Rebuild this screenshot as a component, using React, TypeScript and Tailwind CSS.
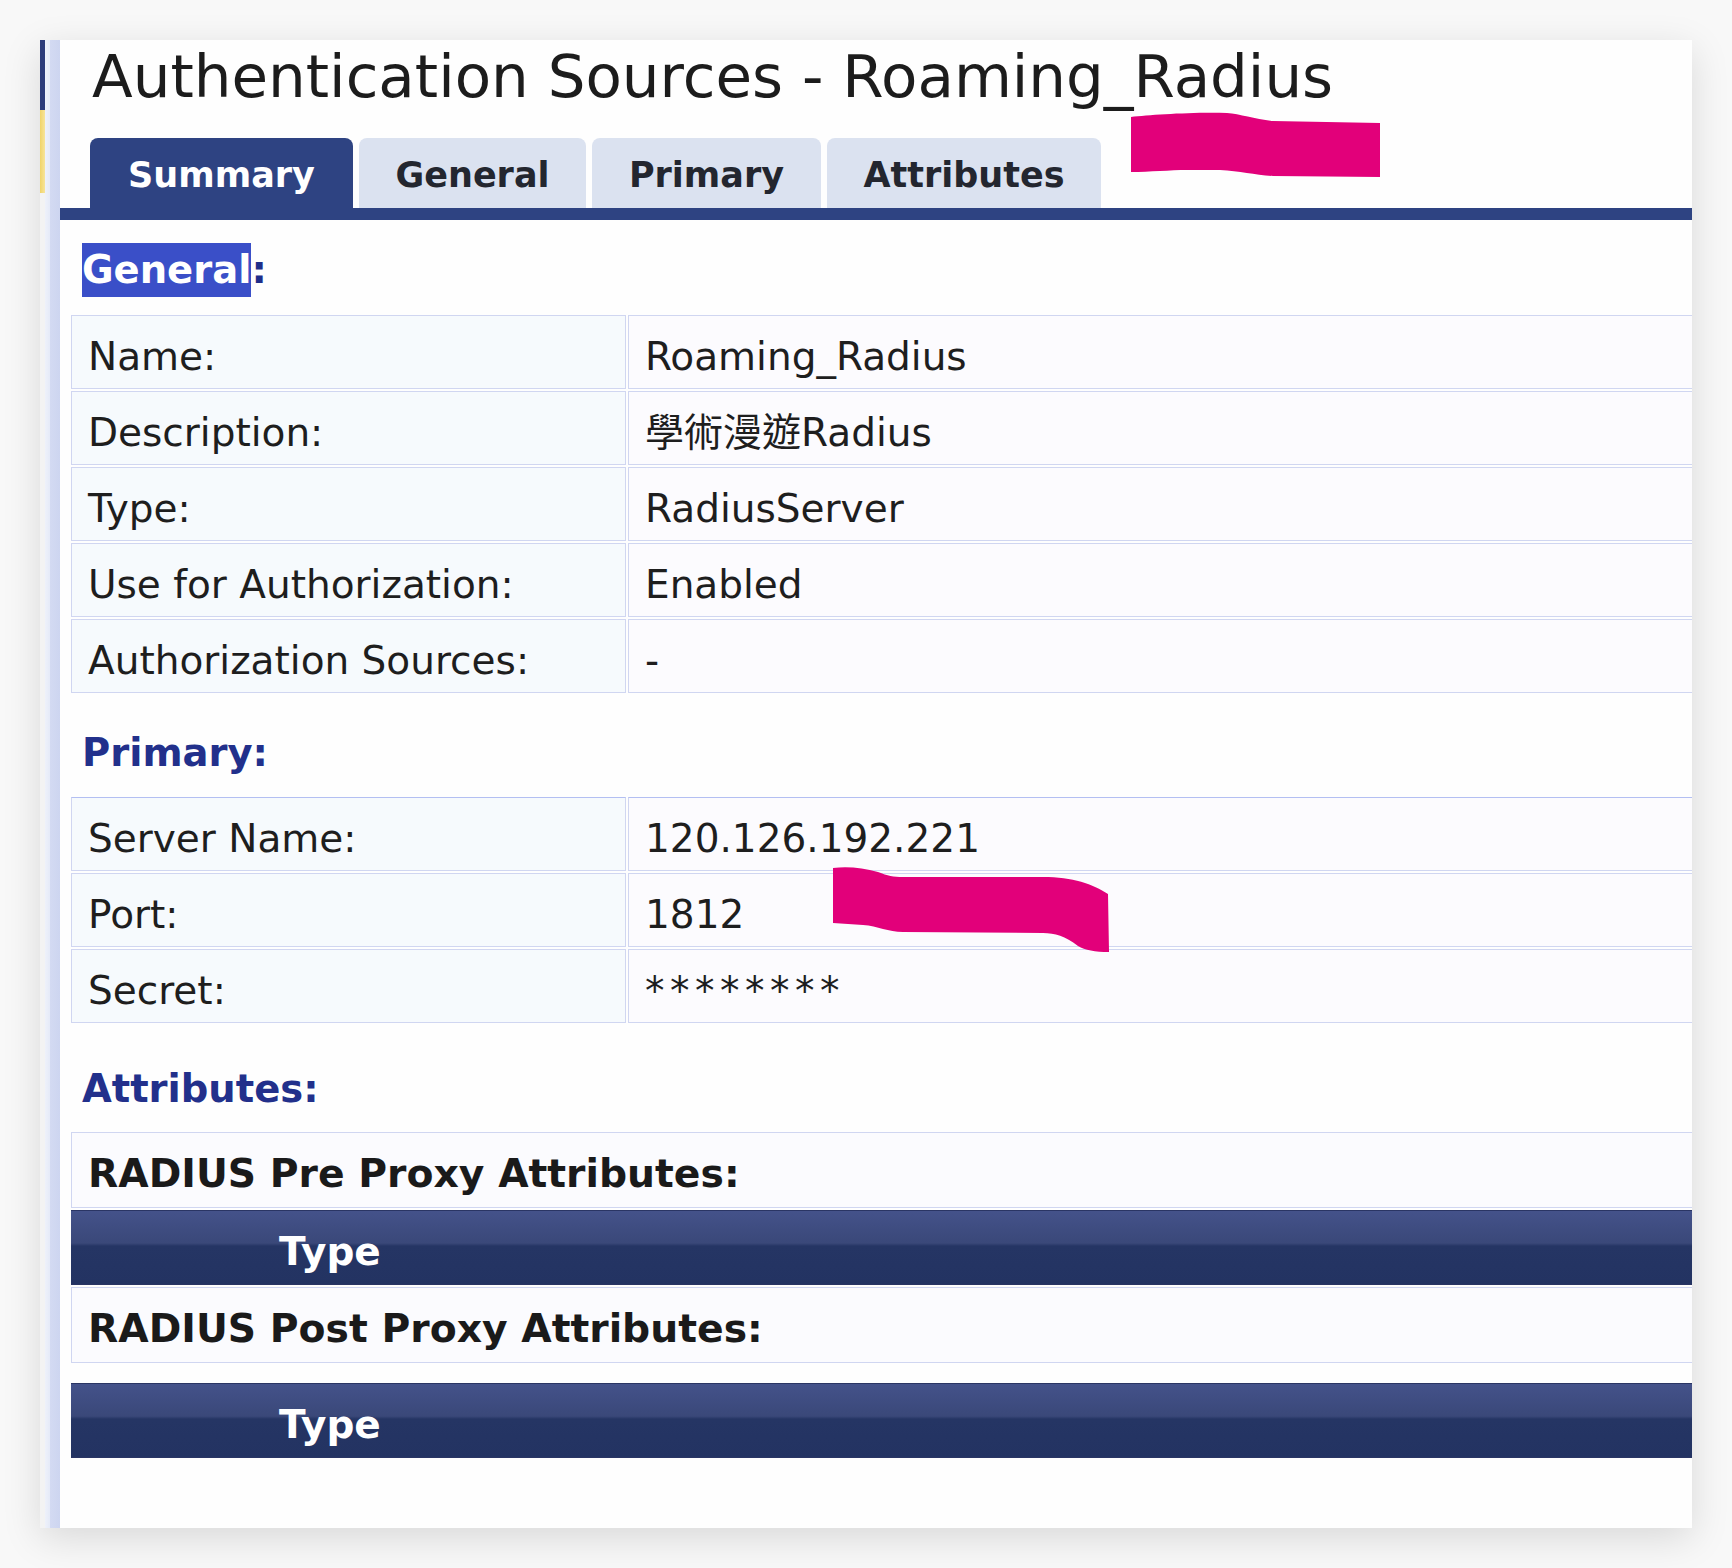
import React from "react";

const generalRows = [
  { label: "Name:", value: "Roaming_Radius" },
  { label: "Description:", value: "學術漫遊Radius" },
  { label: "Type:", value: "RadiusServer" },
  { label: "Use for Authorization:", value: "Enabled" },
  { label: "Authorization Sources:", value: "-" },
];

const primaryRows = [
  { label: "Server Name:", value: "120.126.192.221" },
  { label: "Port:", value: "1812" },
  { label: "Secret:", value: "********" },
];

const tabs = [
  { name: "Summary", width: "w-[263px]", active: true },
  { name: "General", width: "w-[227px]", active: false },
  { name: "Primary", width: "w-[229px]", active: false },
  { name: "Attributes", width: "w-[274px]", active: false },
];

const InfoTable = ({ rows, topLine }: { rows: { label: string; value: string }[]; topLine?: boolean }) => (
  <table className="ml-[9px] w-[1640px] border-separate border-spacing-[2px]">
    <tbody>
      {rows.map((row, i) => (
        <tr key={i}>
          <td
            className={
              "h-[74px] w-[555px] border border-[#d0d6f1] bg-[#f6fafd] px-[16px] pt-[9px] align-middle text-[39px] leading-none whitespace-nowrap text-[#1e1e1e] " +
              (topLine && i === 0 ? "border-t-[#b3bff2]" : "")
            }
          >
            {row.label}
          </td>
          <td
            className={
              "h-[74px] border border-[#d0d6f1] bg-[#fcfbfe] px-[16px] pt-[9px] align-middle text-[39px] leading-none whitespace-nowrap text-[#1e1e1e] " +
              (topLine && i === 0 ? "border-t-[#b3bff2]" : "")
            }
          >
            {row.value === "********" ? <span className="tracking-[5.5px]">{row.value}</span> : row.value}
          </td>
        </tr>
      ))}
    </tbody>
  </table>
);

const TypeHeader = () => (
  <td className="h-[75px] border-y border-[#2a3564] bg-[linear-gradient(to_bottom,#44528a_0%,#3a4879_44%,#253564_48%,#233362_100%)] pl-[208px] pt-[7px] align-middle text-[39px] leading-none font-bold text-white">
    Type
  </td>
);

const AttrRow = ({ text }: { text: string }) => (
  <td className="h-[76px] border border-[#d0d6f1] bg-[#fbfbfe] px-[16px] pt-[8px] align-middle text-[39.3px] leading-none font-bold whitespace-nowrap text-[#1a1a1a]">
    {text}
  </td>
);

export default function App() {
  return (
    <div className="relative h-[1568px] w-[1732px] overflow-hidden bg-[#f8f8f8] pl-[40px] pt-[40px] font-['DejaVu_Sans','Noto_Sans_CJK_TC',sans-serif]">
      <div className="flex h-[1488px] w-[1652px] bg-[#fefefe] shadow-[0_10px_36px_rgba(0,0,0,0.13)]">
        {/* left frame strips */}
        <div className="flex w-[5px] flex-col">
          <div className="h-[70px] bg-[#2c3b7a]" />
          <div className="h-[83px] bg-[linear-gradient(to_right,#f0d46a,#f7e49a)]" />
          <div className="flex-1 bg-[#f3f3f3]" />
        </div>
        <div className="w-[15px] bg-[linear-gradient(to_right,#eef1fa_0%,#e6ebf8_30%,#d3daf2_35%,#cdd5f0_100%)]" />

        <div className="flex min-w-0 flex-1 flex-col overflow-hidden">
          <div className="h-[98px] pl-[32px] pt-[7px] text-[59.5px] leading-[59.5px] whitespace-nowrap text-[#1c1c1c]">
            Authentication Sources - Roaming_Radius
          </div>

          <div className="flex h-[70px] gap-[6px] pl-[30px]">
            {tabs.map((tab) => (
              <div
                key={tab.name}
                className={
                  "flex h-full items-center justify-center rounded-t-[8px] pt-[4px] text-[35px] leading-none font-bold " +
                  tab.width +
                  (tab.active ? " bg-[#2e4382] text-white" : " bg-[#dbe2f0] text-[#23262f]")
                }
              >
                {tab.name}
              </div>
            ))}
          </div>
          <div className="h-[12px] bg-[#2e4382]" />

          <div className="ml-[22px] mt-[23px] h-[54px] text-[38.5px] leading-[54px] font-bold text-[#1f2e8a]">
            <span className="inline-block h-[54px] bg-[#3a4fc8] text-white">General</span>:
          </div>
          <div className="mt-[16px]">
            <InfoTable rows={generalRows} />
          </div>

          <div className="ml-[22px] mt-[31px] h-[54px] text-[38.5px] leading-[54px] font-bold text-[#22308b]">Primary:</div>
          <div className="mt-[15px]">
            <InfoTable rows={primaryRows} topLine />
          </div>

          <div className="ml-[22px] mt-[37px] h-[54px] text-[38.5px] leading-[54px] font-bold text-[#22308b]">Attributes:</div>
          <table className="ml-[9px] mt-[14px] w-[1640px] border-separate border-spacing-[2px]">
            <tbody>
              <tr>
                <AttrRow text="RADIUS Pre Proxy Attributes:" />
              </tr>
              <tr>
                <TypeHeader />
              </tr>
              <tr>
                <AttrRow text="RADIUS Post Proxy Attributes:" />
              </tr>
            </tbody>
          </table>
          <table className="ml-[9px] mt-[16px] w-[1640px] border-separate border-spacing-[2px]">
            <tbody>
              <tr>
                <TypeHeader />
              </tr>
            </tbody>
          </table>
        </div>
      </div>

      {/* redaction marks */}
      <svg className="absolute left-[1130px] top-[110px]" width="252" height="70" viewBox="0 0 252 70">
        <path d="M1 7 C20 5 60 2 97 3 C110 4 125 9 143 11 L250 13 L250 67 L143 66 C125 65 110 61 90 60 L57 60 C40 60 20 62 1 62 Z" fill="#e2007a" />
      </svg>
      <svg className="absolute left-[833px] top-[866px]" width="278" height="90" viewBox="0 0 278 90">
        <path d="M0 2 C15 0 30 2 45 6 C55 10 60 11 70 11 L210 11 C240 11 260 18 275 28 L276 86 C262 86 252 84 245 80 C232 70 222 67 210 67 L70 66 C55 66 45 60 30 59 L0 57 Z" fill="#e2007a" />
      </svg>
    </div>
  );
}
